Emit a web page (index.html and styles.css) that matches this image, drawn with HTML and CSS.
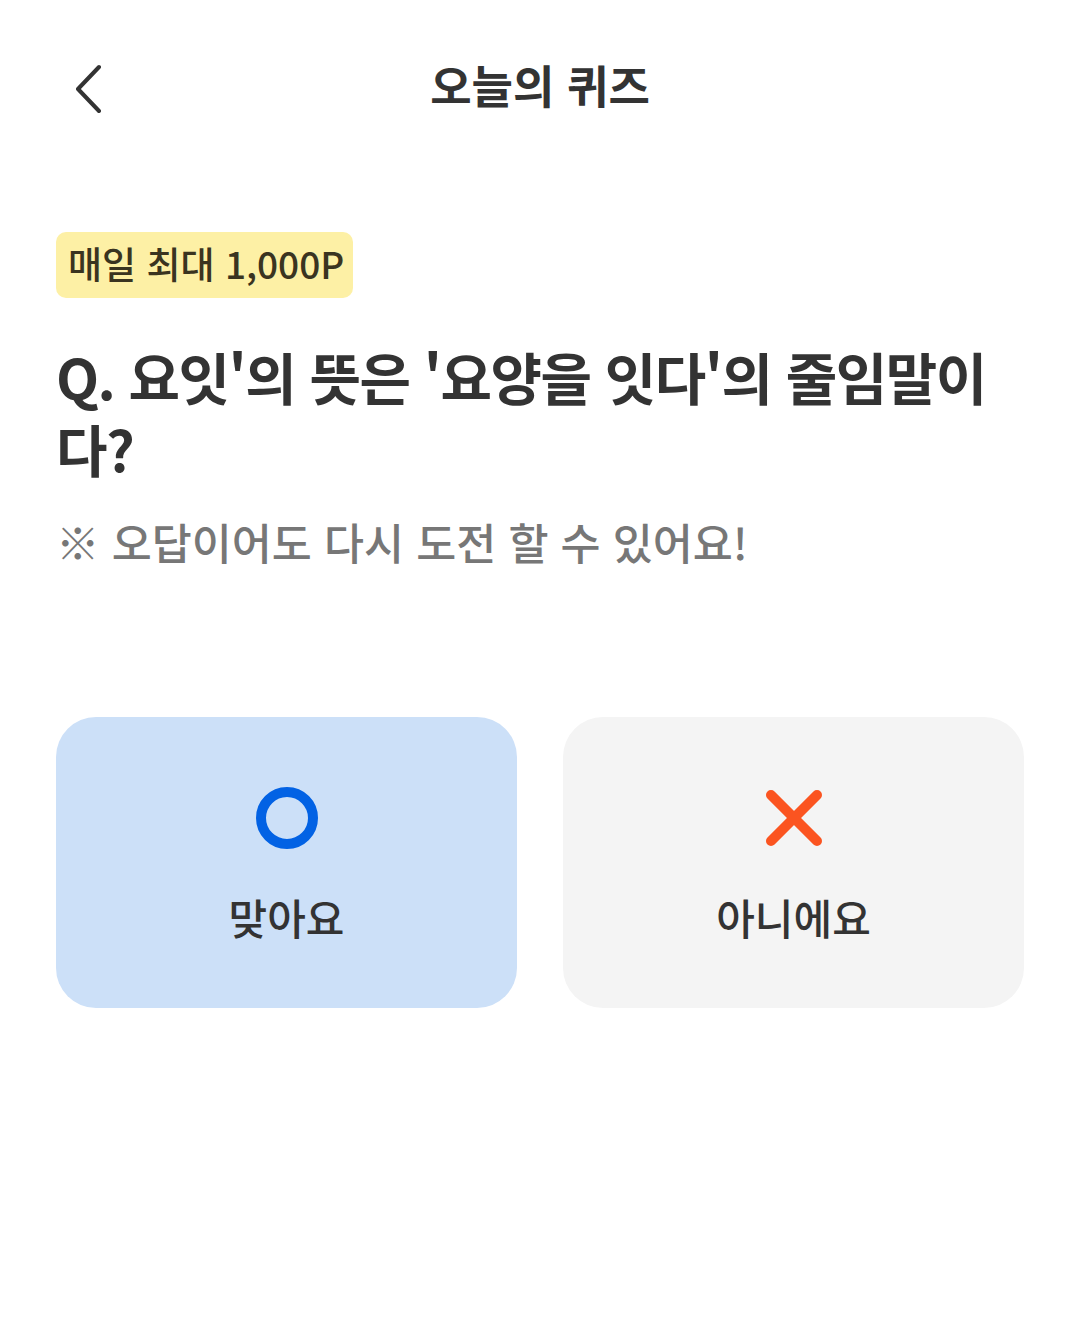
FILE: index.html
```html
<!DOCTYPE html>
<html lang="ko">
<head>
<meta charset="utf-8">
<title>오늘의 퀴즈</title>
<link rel="stylesheet" href="styles.css">
</head>
<body>
<div class="page">
  <header class="header">
    <button class="back" aria-label="뒤로">
      <svg width="40" height="50" viewBox="0 0 40 50">
        <polyline points="29,4 8,26 29,48" fill="none" stroke="#333" stroke-width="4" stroke-linecap="round" stroke-linejoin="round"/>
      </svg>
    </button>
    <h1 class="title">오늘의 퀴즈</h1>
    <span class="spacer"></span>
  </header>

  <main class="content">
    <div class="badge">매일 최대 1,000P</div>
    <h2 class="question">Q. 요잇'의 뜻은 '요양을 잇다'의 줄임말이 다?</h2>
    <p class="note">※ 오답이어도 다시 도전 할 수 있어요!</p>

    <div class="choices">
      <button class="choice choice-yes">
        <svg class="icon" width="62" height="62" viewBox="0 0 62 62">
          <circle cx="31" cy="31" r="26" fill="none" stroke="#0262e4" stroke-width="10"/>
        </svg>
        <span class="label">맞아요</span>
      </button>
      <button class="choice choice-no">
        <svg class="icon" width="62" height="62" viewBox="0 0 62 62">
          <line x1="8" y1="8" x2="54" y2="54" stroke="#fb5420" stroke-width="10" stroke-linecap="round"/>
          <line x1="54" y1="8" x2="8" y2="54" stroke="#fb5420" stroke-width="10" stroke-linecap="round"/>
        </svg>
        <span class="label">아니에요</span>
      </button>
    </div>
  </main>
</div>
</body>
</html>
```

FILE: styles.css
```css
* {
  box-sizing: border-box;
}

html, body {
  margin: 0;
  padding: 0;
  background: #ffffff;
}

body {
  font-family: "Noto Sans CJK KR", "Noto Sans", "Liberation Sans", sans-serif;
  color: #333333;
}

.page {
  width: 1080px;
  min-height: 1341px;
  padding: 0 56px;
}

.header {
  height: 172px;
  display: grid;
  grid-template-columns: 1fr auto 1fr;
  align-items: center;
}

.back {
  justify-self: start;
  width: 40px;
  height: 50px;
  margin-left: 14px;
  margin-top: 4px;
  padding: 0;
  border: 0;
  background: none;
  display: flex;
}

.title {
  margin: 0 0 4px;
  font-size: 45px;
  font-weight: 700;
  letter-spacing: 0;
  color: #333333;
}

.content {
  display: flex;
  flex-direction: column;
  align-items: flex-start;
}

.badge {
  margin-top: 60px;
  height: 66px;
  padding: 0 0 4px 12px;
  width: 297px;
  display: flex;
  align-items: center;
  background: #fdf0a5;
  border-radius: 10px;
  font-size: 37px;
  font-weight: 500;
  color: #3a3420;
  letter-spacing: 0;
}

.question {
  margin: 42px 0 0;
  font-size: 56px;
  line-height: 72px;
  font-weight: 700;
  color: #333333;
  letter-spacing: -1.5px;
}

.note {
  margin: 28px 0 0;
  font-size: 43.5px;
  line-height: 60px;
  font-weight: 500;
  color: #777777;
  letter-spacing: 0;
}

.choices {
  align-self: stretch;
  margin-top: 145px;
  display: grid;
  grid-template-columns: 1fr 1fr;
  gap: 46px;
}

.choice {
  height: 291px;
  border: 0;
  border-radius: 40px;
  padding: 70px 0 0;
  display: flex;
  flex-direction: column;
  align-items: center;
  font-family: inherit;
  cursor: pointer;
}

.choice-yes {
  background: #cce0f8;
}

.choice-no {
  background: #f4f4f4;
}

.icon {
  display: block;
}

.label {
  margin-top: 42px;
  font-size: 42px;
  line-height: 52px;
  font-weight: 500;
  color: #333333;
}
```
